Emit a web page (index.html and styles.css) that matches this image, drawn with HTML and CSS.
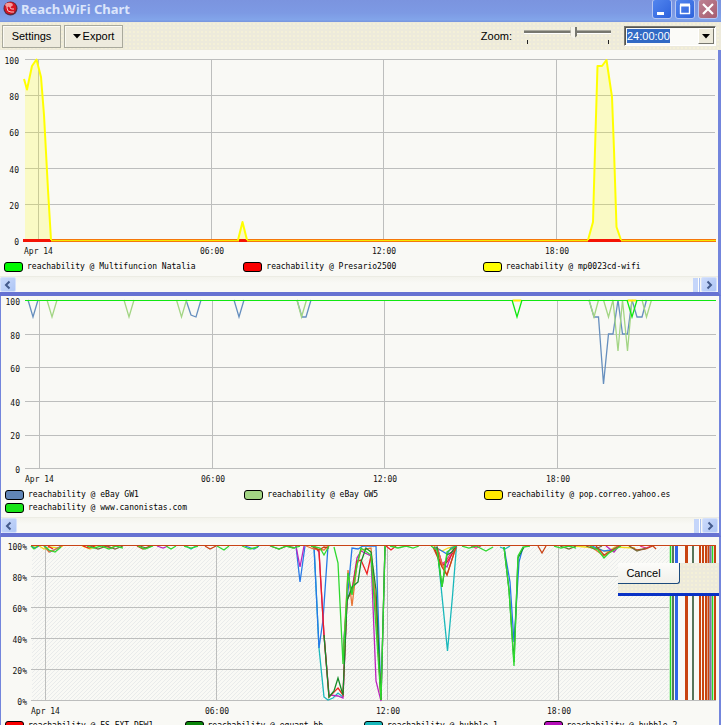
FILE: index.html
```html
<!DOCTYPE html>
<html lang="en">
<head>
<meta charset="utf-8">
<title>Reach.WiFi Chart</title>
<link rel="stylesheet" href="styles.css">
</head>
<body>
<header class="titlebar">
  <svg class="logo" viewBox="0 0 15 15" aria-hidden="true">
    <circle cx="7.5" cy="7.5" r="7" fill="#5d2b3c"/>
    <circle cx="7.3" cy="7" r="6" fill="#d81522"/>
    <ellipse cx="6" cy="3.8" rx="3.8" ry="2" fill="#f69a9a"/>
    <path d="M4 5v2a4 4 0 0 0 4 4h3M7 5v1a2 2 0 0 0 2 2h2" fill="none" stroke="#f7c4c4" stroke-width="1"/>
  </svg>
  <h1 class="title">Reach.WiFi Chart</h1>
  <div class="window-buttons">
    <button class="win" aria-label="Minimize"><svg viewBox="0 0 18 18"><path d="M4 13.500h7" stroke="#fff" stroke-width="3"/></svg></button>
    <button class="win" aria-label="Maximize"><svg viewBox="0 0 18 18"><path d="M4.500 5v9M13.500 5v9M4 13.500h10" fill="none" stroke="#fff" stroke-width="1.400"/><path d="M4 5h10" stroke="#fff" stroke-width="3"/></svg></button>
    <button class="win close" aria-label="Close"><svg viewBox="0 0 18 18"><path d="M4 4l10 10M14 4l-10 10" stroke="#fff" stroke-width="2.200"/></svg></button>
  </div>
</header>

<div class="toolbar">
  <button class="tool">Settings</button>
  <button class="tool"><svg class="caret" viewBox="0 0 8 5"><path d="M0 0h8L4 4.500z"/></svg>Export</button>
  <label class="zoom-label" for="zoom">Zoom:</label>
  <div class="slider">
    <input id="zoom" type="range" min="0" max="100" value="58">
    <div class="ticks"></div>
  </div>
  <div class="combo">
    <input class="combo-text" type="text" value="24:00:00" aria-label="Time range">
    <button class="combo-drop" aria-label="Show ranges"><svg class="caret" viewBox="0 0 8 5"><path d="M0 0h8L4 4.500z"/></svg></button>
  </div>
</div>

<section class="panel first">
  <svg class="chart" viewBox="0 50 718 210" role="img" aria-label="Reachability, WiFi">
    <path class="grid" d="M25 59.500H715M25 95.500H715M25 132.500H715M25 168.500H715M25 204.500H715M38.500 59V240M211.500 59V240M383.500 59V240M556.500 59V240"/>
    <g class="axis end"><text x="19" y="64">100</text><text x="19" y="100">80</text><text x="19" y="136">60</text><text x="19" y="173">40</text><text x="19" y="209">20</text><text x="19" y="245">0</text></g>
    <g class="axis"><text x="24" y="254">Apr 14</text></g>
    <g class="axis mid"><text x="212" y="254">06:00</text><text x="384" y="254">12:00</text><text x="557" y="254">18:00</text></g>
    <path fill="#ffff00" fill-opacity=".2" d="M25 240V79L27 89 32 66 36.500 59.500 41 77 44 115 48 190 51 240ZM238 240L242.500 222 247 240ZM588 240L593 222 597 66H602L606.500 60 612 97 616.500 227 621 240Z"/>
    <path d="M23 240.500H716" stroke="#f5780a" stroke-width="3"/>
    <path d="M24 240.500H716" stroke="#f5e800" stroke-width="1"/>
    <path d="M23 240.500H51M239 240.500H247M588 240.500H621" stroke="#f51405" stroke-width="3"/>
    <path class="line yellow" d="M24 79L27 89.500 32 66 36.500 59.500 41 77 44 115 48 190 51 240M238 240L242.500 222 247 240M588 240L593 222 595 150 597.500 66H602L606.500 60 612 97 614 150 616.500 227 621 240"/>
  </svg>
  <ul class="legend">
    <li><i class="sw lime"></i>reachability @ Multifuncion Natalia</li>
    <li><i class="sw red"></i>reachability @ Presario2500</li>
    <li><i class="sw yel"></i>reachability @ mp0023cd-wifi</li>
  </ul>
  <div class="scroll">
    <button aria-label="Scroll left"><svg viewBox="0 0 14 14"><path d="M8.500 3.500L5 7l3.500 3.500"/></svg></button>
    <span class="thumb"></span>
    <button aria-label="Scroll right"><svg viewBox="0 0 14 14"><path d="M5.500 3.500L9 7l-3.500 3.500"/></svg></button>
  </div>
</section>

<section class="panel second">
  <svg class="chart" viewBox="1 296 718 192" role="img" aria-label="Reachability, hosts">
    <path class="grid" d="M25 334.500H716M25 367.500H716M25 401.500H716M25 435.500H716M25 468.500H716M39.500 300V468M212.500 300V468M384.500 300V468M557.500 300V468"/>
    <g class="axis end"><text x="20" y="305">100</text><text x="20" y="339">80</text><text x="20" y="372">60</text><text x="20" y="406">40</text><text x="20" y="439">20</text><text x="20" y="473">0</text></g>
    <g class="axis"><text x="25" y="482">Apr 14</text></g>
    <g class="axis mid"><text x="213" y="482">06:00</text><text x="385" y="482">12:00</text><text x="558" y="482">18:00</text></g>
    <path class="fine" stroke="#668fbe" d="M28 300L33 317 38 300M186 300L191 315 196 317 201 300M234 300L239 317 244 300M297 300L302 317H306L311 300M589 300L594 317H598.500L603.500 384 608.500 334H613L618 300 622.500 334H627.500L632 300 637 317H642L646.500 300"/>
    <path class="fine" stroke="#a3d584" d="M47 300L52 317 57 300M124 300L129 317 134 300M176.500 300L181.500 317 186.500 300M297 300L301.500 317 306.500 300M589 300L594 317 598.500 300M603.500 300L608.500 317 613 300 618 351 622.500 300 627.500 351 632 300M642 300L646.500 317 651.500 300"/>
    <path class="fine" stroke="#10e810" d="M512 300L517 317 522 300M627 300L632 317 637 300"/>
    <path d="M25 300.500H716" stroke="#10e810"/>
    <path d="M513 300.500h8M628 300.500h8" stroke="#ffe800" stroke-width="2"/>
  </svg>
  <ul class="legend">
    <li><i class="sw steel"></i>reachability @ eBay GW1</li>
    <li><i class="sw sage"></i>reachability @ eBay GW5</li>
    <li><i class="sw gold"></i>reachability @ pop.correo.yahoo.es</li>
    <li><i class="sw green"></i>reachability @ www.canonistas.com</li>
  </ul>
  <div class="scroll">
    <button aria-label="Scroll left"><svg viewBox="0 0 14 14"><path d="M8.500 3.500L5 7l3.500 3.500"/></svg></button>
    <span class="thumb"></span>
    <button aria-label="Scroll right"><svg viewBox="0 0 14 14"><path d="M5.500 3.500L9 7l-3.500 3.500"/></svg></button>
  </div>
</section>

<section class="panel third">
  <svg class="chart" viewBox="1 537 718 182" role="img" aria-label="Reachability, percent">
    <defs><pattern id="dots" width="4" height="4" patternUnits="userSpaceOnUse"><path d="M0 0h1v1H0zM2 2h1v1H2zM3 1h1v1H3zM1 3h1v1H1z" fill="#e9ebeb"/></pattern></defs>
    <path fill="url(#dots)" d="M32 547H296L300 582 305 547H314L319 648 324 697 328 700 338 693 343 697 347 600 352 547H376L381 700 385 547H437L447.500 651 456 547H504L514 666 523 547H716V700H32Z"/>
    <path class="grid" d="M31 576.500H716M31 607.500H716M31 638.500H716M31 669.500H716M31 700.500H716M45.500 545V700M216.500 545V700M387.500 545V700M558.500 545V700"/>
    <g class="axis end"><text x="27" y="550">100%</text><text x="27" y="581">80%</text><text x="27" y="612">60%</text><text x="27" y="643">40%</text><text x="27" y="674">20%</text><text x="27" y="705">0%</text></g>
    <g class="axis"><text x="31" y="714">Apr 14</text></g>
    <g class="axis mid"><text x="217" y="714">06:00</text><text x="388" y="714">12:00</text><text x="559" y="714">18:00</text></g>
    <g class="fine">
      <path stroke="#f0dd20" d="M31 546h8l5 3 6-2 8 1 5-2M82 546l8 3 6-3M102 546l8 2 5-2M434 546l8 5 6-3 8-2M575 546l20 2 12 4 8-5 20 1"/>
      <path stroke="#2679e8" d="M31 546l4 2 4-2M45 546l5 6 6-3 5-3M245 546l9 3 5-3M434 547l8 4 5 3 4-6 5-2M592 546l12 5 8-1 6-4M504 547l6 35 4 60 5-80 4-15"/>
      <path stroke="#19b8bb" d="M186 546l5 3 5-3M314 546l5 102 5 49 4 3 5-2 5-5 5 4M437 546l5 50 5.500 55 5-55 4-50M500 547l5 2 5-3"/>
      <path stroke="#2679e8" d="M296 546l4 36 5-36M314 546l5 102 4-28 5-74M343 650l4-48 5-54 6 1 5-3H376l5 154"/>
      <path stroke="#bb25bd" d="M157 546l6 2 5-2M296 546l4 21 4-21M314 546l5 6 5 83 5 60 9 1 5 2 4-98 5-10 5-32 4-7 10 5 5 125 5 20 4-154M437 547l5 16 5 4 5-14M606 546l8 6 5-6"/>
      <path stroke="#ef2020" d="M48 546l5 3M83 546l6 2 6-2M314 546l5 5 5 84 5 62 9-9 5 7 4-96 5-8 5-30 4-1 6 14 4-18 5 53 5 91M386 546l5 4 5-4M434 547l8 19 5-4 9-14"/>
      <path stroke="#ef2b85" d="M105 546l6 2 5-2M437 547l5 17 4-3 8-13M471 546l5 2 5-2M640 546l6 2 5-2"/>
      <path stroke="#e87536" d="M44 546l5 6 5-2 8-4M306 546l8 3 10 1 4-4M343 660l5-90 4 36 5-41 4-15 10-2 5 60 5 92M437 547l5 17 5 11 9-28M590 546l14 10 8-5 6-5"/>
      <path stroke="#168c28" d="M324 635l5 62 5-6 4-13 5 17 4-94 5-14 6-5 3-20 5-14 5 4 5 38 5 110 4-154M437 547l5 40 5-32 5-3 4-6M504 547l5 43 5 72 4-104 6-11"/>
      <path stroke="#c84316" d="M137 546l6 3 7-3M205 546l5 3 6-3M311 546l8 4 5-3 5 1M433 547l9 20 5 8 9-28M538 546l4 7 4-7M596 546l8 9 10-6 6-3M629 546l8 4 8-1 8-3 3 3"/>
      <path stroke="#766c39" d="M90 546l8 3 9-3 8 3 8-3M140 546l6 2 6-2M270 546l9 3 8-3 8 2M560 546l9 3 7-3M586 546l9 3 7-3M629 546l8 5 9-3"/>
      <path stroke="#30d830" d="M31 546l3 3 4-3M44 546l5 4 6 2 6-5M87 546l7 2 7-2 8 3 7-3 7 2M138 546l7 3 8-3M166 546l5 3 5-3M184 546l7 2 7-2M217 546l7 4 5-4M242 546l8 3 8-2M271 546l8 3 7-3 7 2 7-2M311 546l9 2 4 7 5-9M334 547l4 16 5 101 5-91 4 22 5-30 4-17 10 7 10 145 4-154M390 546l8 2 8-2 7 2 6-2M431 546l6 4 5 37 5-35 9-6M462 546l7 2 7-2 10 5 7-4M504 547l5 43 5 76 4-110 5-9 7-1M554 546l7 2 8-2 7 2M590 546l8 4 6 8 5-5 7-4 5-3"/>
    </g>
    <path d="M669 546H716V700H669Z" fill="#f9f9f5"/>
    <path d="M670.500 546V700M712.500 546V700" stroke="#25dc28" stroke-width="1.500"/>
    <path d="M673 546V700M693 546V700" stroke="#58745a" stroke-width="2"/>
    <path d="M676.500 546V700" stroke="#2f65e8" stroke-width="3"/>
    <path d="M686.500 546V700" stroke="#c84310" stroke-width="3"/>
    <path d="M700 546V700M703 546V700M706 546V700M708.500 546V700M715 546V700" stroke="#c84310" stroke-width="2"/>
    <path d="M710.500 546V700" stroke="#8273a5" stroke-width="2"/>
    <path d="M31 545.500H716" stroke="#c84316"/>
  </svg>
  <ul class="legend four">
    <li><i class="sw red"></i>reachability @ ES-EXT-DEW1</li>
    <li><i class="sw forest"></i>reachability @ equant-bb</li>
    <li><i class="sw teal"></i>reachability @ hubble-1</li>
    <li><i class="sw purple"></i>reachability @ hubble-2</li>
  </ul>
  <div class="dialog"><button class="cancel">Cancel</button></div>
</section>
</body>
</html>
```
FILE: styles.css
```css
* { box-sizing: border-box; }
html { height: 100%; overflow: hidden; }
body {
  margin: 0;
  min-height: 100vh;
  background: #f9f9f5;
  color: #000;
  font: 11px "Liberation Sans", sans-serif;
}
button, input { font: inherit; color: inherit; margin: 0; padding: 0; }
button { display: flex; align-items: center; justify-content: center; }

.titlebar {
  display: flex;
  align-items: center;
  height: 22px;
  padding: 0 3px;
  gap: 3px;
  background: linear-gradient(#7b94df, #7d9ae4 60%, #82a5ea 90%, #7894dd);
}
.logo { width: 15px; height: 15px; margin-bottom: 5px; }
.title {
  flex: 1;
  margin: 0 0 4px;
  color: #dbe5fb;
  font: bold 13px/18px "Noto Sans", sans-serif;
}
.window-buttons { display: flex; gap: 3px; margin-bottom: 4px; }
.win {
  width: 20px;
  height: 20px;
  border: 1px solid #b5c6f3;
  border-radius: 3px;
  background: linear-gradient(135deg, #5285ee, #2d62dc);
}
.win svg { width: 18px; height: 18px; flex: none; }
.close { background: linear-gradient(135deg, #bd8293, #a75d70); }

.toolbar {
  display: flex;
  align-items: center;
  height: 28px;
  padding: 0 5px 0 2px;
  gap: 3px;
  background-color: #edeadb;
  background-image: radial-gradient(#f4f0d8 1px, transparent 1px);
  background-size: 4px 4px;
}
.tool {
  height: 23px;
  width: 59px;
  gap: 2px;
  border: 1px solid #a9a99c;
  background: #eeebde;
  box-shadow: inset 1px 1px #fbfaf4;
}
.caret { width: 8px; height: 5px; }
.zoom-label { margin-left: auto; padding-right: 9px; }
.slider { width: 87px; height: 20px; margin-right: 10px; }
.slider input {
  display: block;
  width: 100%;
  height: 13px;
  appearance: none;
  background: linear-gradient(#aaa99e 0 1px, #77776f 1px 3px, #fff 3px 4px) 0 4px / 100% 4px no-repeat;
}
.slider input::-webkit-slider-thumb {
  appearance: none;
  width: 7px;
  height: 12px;
  background: linear-gradient(90deg, #c9c7ba 0 1px, #f6f4ea 1px 5px, #77776f 5px);
  clip-path: polygon(0 0, 100% 0, 100% 75%, 50% 100%, 0 75%);
}
.ticks { height: 4px; margin: 1px 2px 0 3px; border: solid #222; border-width: 0 1px; }
.combo {
  display: flex;
  align-items: center;
  width: 92px;
  height: 20px;
  padding: 1px;
  border: 1px solid;
  border-color: #77776f #fff #fff #77776f;
  box-shadow: inset 1px 1px #55554f;
  background: #fbfbf8;
}
.combo-text {
  width: 43px;
  height: 14px;
  margin: 0 auto 0 1px;
  border: 0;
  background: #316ac5;
  color: #fff;
}
.combo-drop {
  width: 16px;
  height: 16px;
  border: 1px solid;
  border-color: #fff #77776f #77776f #fff;
  background: #edeadb;
}

.panel { position: relative; background: #f9f9f5; border-right: 2px solid #7385dc; }
.first { border-right-width: 3px; }
.second, .third { border-left: 1px solid #7385dc; }
.first, .second { border-bottom: 4px solid #6672d2; }
.chart { display: block; width: 100%; height: auto; }
.grid { fill: none; stroke: #bdbebd; stroke-width: 1; }
.axis { font: 8px "DejaVu Sans Mono", monospace; fill: #111; }
.end { text-anchor: end; }
.mid { text-anchor: middle; }
.line { fill: none; stroke-linejoin: round; }
.yellow { stroke: #ffff00; stroke-width: 2; }
.fine { fill: none; stroke-width: 1.3; }

.legend {
  display: grid;
  grid-template-columns: repeat(3, 1fr);
  row-gap: 3px;
  margin: 0;
  padding: 2px 0 4px;
  list-style: none;
  font: 8px/10px "DejaVu Sans Mono", monospace;
}
.four { grid-template-columns: repeat(4, 1fr); }
.legend li { display: flex; gap: 4px; padding-left: 4px; white-space: nowrap; }
.sw { width: 19px; height: 10px; border: 1px solid #000; border-radius: 3px; }
.lime { background: #00fa00; }
.red { background: #fa0000; }
.yel { background: #ffff00; }
.steel { background: #6185b7; }
.sage { background: #a3d584; }
.gold { background: #ffe800; }
.green { background: #18e518; }
.forest { background: #0a850a; }
.teal { background: #19b8bb; }
.purple { background: #b50eb8; }

.scroll {
  display: flex;
  align-items: center;
  height: 16px;
  padding-right: 1px;
  gap: 1px;
  border-top: 1px solid #ecece4;
  background: linear-gradient(#f3f3ec, #f9f9f5 40%);
}
.scroll button {
  width: 16px;
  height: 15px;
  border: 1px solid #d5e1fb;
  border-radius: 2px;
  background: linear-gradient(135deg, #cbdafb, #aec6f5);
}
.scroll svg { width: 14px; height: 14px; flex: none; fill: none; stroke: #435a8c; stroke-width: 2; }
.thumb {
  width: 7px;
  height: 14px;
  margin-left: auto;
  border-right: 1px solid #a9c0ef;
  box-shadow: inset -1px 0 #fff;
  background: #c5d6fa;
}

.dialog {
  position: absolute;
  top: 26px;
  right: 0;
  width: 101px;
  height: 33px;
  border-bottom: 3px solid #0831c5;
  background-color: #edeadb;
  background-image: radial-gradient(#f4f0d8 1px, transparent 1px);
  background-size: 4px 4px;
}
.cancel {
  width: 62px;
  height: 21px;
  padding-right: 10px;
  border: solid #1c4a7c;
  border-width: 0 1px 1px 0;
  border-radius: 0 0 3px 0;
  background: linear-gradient(#fcfcfa, #f1f0ea);
}
```
